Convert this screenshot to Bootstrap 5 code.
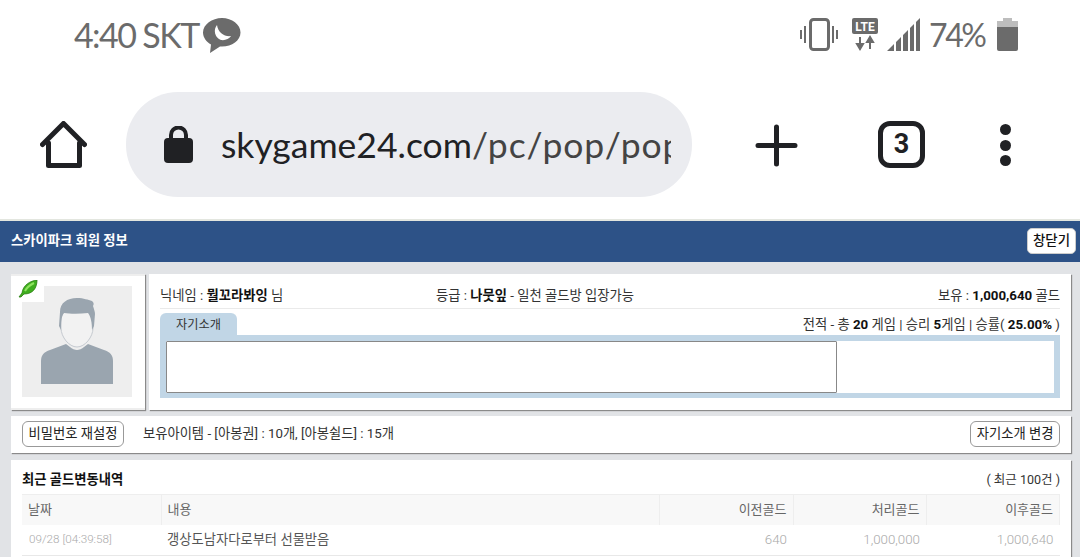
<!DOCTYPE html>
<html lang="ko">
<head>
<meta charset="UTF-8">
<meta name="viewport" content="width=device-width">
<title>스카이파크 회원 정보</title>
<link href="https://cdn.jsdelivr.net/npm/bootstrap@5.3.3/dist/css/bootstrap.min.css" rel="stylesheet">
<style>
  html, body { height: 557px; overflow: hidden; }
  body { background: #e1e3e6; font-family: Roboto, "Noto Sans CJK KR", sans-serif; font-size: 13.3px; color: #333; }
  b { color: #111; font-weight: 700; }
  .phone-top { background: #fff; height: 219px; }
  .status-row { height: 70px; padding: 18px 62px 0 74px; color: #666; }
  .status-text { font-family: Lato, sans-serif; font-size: 34px; line-height: 33px; letter-spacing: -1.6px; color: #6b6b6b; white-space: nowrap; }
  .pct-text { width: 56px; margin-left: 9px; font-size: 32px; letter-spacing: -2.4px; }
  .lte-icon { margin-left: 14px; }
  .signal-icon { margin-left: 9px; }
  .battery-icon { margin-left: 12px; }
  .tool-row { height: 149px; padding: 22px 55px 0 40px; align-items: flex-start; }
  .home-btn { margin-top: 29px; width: 47px; height: 47px; }
  .url-pill { width: 566px; height: 105px; margin-left: 39px; border-radius: 52px; background: #ebecf0; padding: 0 21px 0 38px; }
  .url-text { font-family: Lato, sans-serif; font-size: 35.5px; color: #202124; white-space: nowrap; overflow: hidden; margin-left: 28px; width: 450px; }
  .url-text span { color: #444; letter-spacing: .9px; }
  .plus-btn { margin: 32px 0 0 63px; width: 43px; height: 43px; }
  .tab-count { margin: 29px 0 0 80px; width: 47px; height: 47px; border: 5px solid #202124; border-radius: 12px; font-family: Roboto, sans-serif; font-weight: 700; font-size: 27px; color: #202124; }
  .dot-btn { margin: 32px 0 0 75px; width: 13px; }
  .dot-btn i { display: block; width: 11px; height: 11px; background: #202124; border-radius: 50%; margin-bottom: 4.5px; }
  .page-head { height: 43px; background: #2d5287; border-top: 2px solid #e3e6df; padding: 0 4px 2px 11px; }
  .page-title { color: #fff; font-weight: 700; font-size: 13.3px; }
  .close-btn { background: #fff; border: 1px solid #ccc; border-radius: 5px; font-size: 13.4px; font-weight: 500; color: #111; height: 26px; padding: 0 5px; line-height: 24px; }
  .page-wrap { padding: 12px 9px 0 11px; }
  .panel-box { background: #fff; box-shadow: 1px 1px 1px #8a8a8a; }
  .photo-box { width: 134px; height: 136px; padding: 10px 11px 12px; position: relative; border-bottom: 2px solid #eee; border-top: 2px solid #eee; }
  .photo-box svg.face { display: block; width: 110px; height: 111px; background: #eee; }
  .leaf-mark { position: absolute; left: 0; top: 0; width: 33px; height: 26px; background: #fff; padding: 3px 0 0 7px; }
  .info-box { margin-left: 4px; flex: 1; height: 136px; padding: 0 11px; }
  .info-top { height: 35px; border-bottom: 1px solid #eaeaea; padding-top: 12px; }
  .info-top > div { flex: 1; white-space: nowrap; }
  .info-top > div:first-child { flex: 0 0 276px; }
  .tab-line { height: 26px; }
  .intro-tab { width: 77px; height: 22px; margin-top: 4px; background: #c1d6e6; border-radius: 6px 6px 0 0; text-align: center; line-height: 24px; font-size: 12.2px; }
  .stat-line { margin-top: 5px; line-height: 22px; }
  .intro-frame { background: #fff; border: 6px solid #c1d6e6; border-bottom-width: 5px; height: 63px; }
  .intro-area { display: block; width: 671px; height: 52px; border: 1px solid #888; border-radius: 1px; background: #fff; padding: 0; margin: 0; resize: none; }
  .item-box { margin-top: 6px; height: 37px; padding: 0 11px 1px; }
  .line-btn { border: 1px solid #999; border-radius: 6px; background: #fff; height: 26px; padding: 0 5.5px; font-size: 13.3px; line-height: 24px; color: #222; }
  .item-text { margin-left: 19px; }
  .gold-box { margin-top: 7px; padding: 0 11px; height: 120px; }
  .gold-head { height: 34px; padding-top: 6px; }
  .gold-head strong { font-size: 13.3px; color: #111; font-weight: 700; }
  .gold-head span { font-size: 12.5px; }
  .gold-table { table-layout: fixed; width: 100%; border-collapse: collapse; }
  .gold-table th { background: #f8f8f8; font-weight: 400; color: #666; height: 30px; padding: 0 6px; border-right: 1px solid #eee; border-top: 1px solid #eee; font-size: 13px; }
  .gold-table td { height: 31px; padding: 0 6px; color: #aaa; border-bottom: 1px solid #e8e8e8; font-size: 13.3px; font-weight: 300; }
  .gold-table td.gold-date { font-size: 11.7px; padding-left: 7px; }
  .gold-table td.gold-memo { color: #555; font-weight: 400; }
</style>
</head>
<body>
<div class="phone-top">
  <div class="status-row d-flex justify-content-between">
    <div class="d-flex align-items-start">
      <span class="status-text">4:40 SKT</span>
      <svg class="ms-1" width="38" height="36" viewBox="0 0 38 36"><path d="M19 0C9 0 0 6.500 0 14.500c0 5 3.500 9.500 8 12L7 35l10-6.500h2c10 0 18.500-6 18.500-14S29 0 19 0z" fill="#6b6b6b"/><path d="M14 7a9.500 9.500 0 0 0 4 15c4 .7 8-1 10-4-6 1-13-3-14-11z" fill="#fff"/></svg>
    </div>
    <div class="d-flex align-items-start">
      <svg width="38" height="33" viewBox="0 0 38 33" fill="none" stroke="#6b6b6b"><rect x="10.500" y="1.500" width="18" height="30" rx="3" stroke-width="3"/><path d="M5 8v17M1 12v9M33 8v17M37 12v9" stroke-width="2"/></svg>
      <svg class="lte-icon" width="26" height="33" viewBox="0 0 26 33"><rect x="0" y="0" width="26" height="16" rx="2" fill="#6b6b6b"/><text x="13" y="13" text-anchor="middle" font-family="Roboto" font-weight="700" font-size="12" fill="#fff">LTE</text><path d="M8 19v8M5 26l3 5 3-5zM18 31v-8M15 24l3-5 3 5z" fill="#6b6b6b" stroke="#6b6b6b" stroke-width="2"/></svg>
      <svg class="signal-icon" width="33" height="33" viewBox="0 0 33 33" fill="#6b6b6b"><path d="M0 33l7-7v7zM9 33V24l5-5v14zM16 33V17l5-5v21zM23 33V10l4-4v27zM29 33V4l4-4v33z"/></svg>
      <span class="status-text pct-text">74%</span>
      <svg class="battery-icon" width="21" height="33" viewBox="0 0 21 33"><path d="M6 0h9v3h6v6H0V3h6z" fill="#bdbdbd"/><path d="M0 9h21v22a2 2 0 0 1-2 2H2a2 2 0 0 1-2-2z" fill="#6b6b6b"/></svg>
    </div>
  </div>
  <div class="tool-row d-flex">
    <svg class="home-btn" viewBox="0 0 47 47" fill="none" stroke="#202124" stroke-width="5" stroke-linejoin="round" stroke-linecap="round"><path d="M2.500 23.500L23.500 2.500 44.500 23.500M8.500 22v22.500h31V22"/></svg>
    <div class="url-pill d-flex align-items-center">
      <svg width="29" height="37" viewBox="0 0 29 37"><path d="M7 15V9a7.500 7.500 0 0 1 15 0v6" fill="none" stroke="#202124" stroke-width="4"/><rect x="0" y="12" width="29" height="25" rx="4" fill="#202124"/></svg>
      <div class="url-text">skygame24.com<span>/pc/pop/pop</span></div>
    </div>
    <svg class="plus-btn" viewBox="0 0 43 43" stroke="#202124" stroke-width="5" stroke-linecap="round"><path d="M21.500 3v37M3 21.500h37"/></svg>
    <div class="tab-count d-flex align-items-center justify-content-center">3</div>
    <div class="dot-btn"><i></i><i></i><i></i></div>
  </div>
</div>
<div class="page-head d-flex align-items-center justify-content-between">
  <div class="page-title">스카이파크 회원 정보</div>
  <button class="close-btn">창닫기</button>
</div>
<div class="page-wrap">
  <div class="d-flex">
    <div class="panel-box photo-box">
      <svg class="face" viewBox="0 0 110 111">
        <path d="M19 98V75c0-6 3-9 9-11l16-6 4 3c2 2 5 3 7 3s5-1 7-3l4-3 16 6c6 2 9 5 9 11v23z" fill="#9aa5af"/>
        <path d="M39 35c0-9 5-13 16-13s16 4 16 13v7c0 9-8 19-16 19s-16-10-16-19z" fill="#f2f2f2" stroke="#c5cad0"/>
        <path d="M39 44l-2-4 1-14c0-9 7-14 17-14 7 0 11 2 15 3 2 2 2 3 1 5 1 3 2 6 2 8l-1 12-2 4c0-7-1-13-4-17-8 1-18 1-24 0-3 4-3 10-3 17z" fill="#9aa5af"/>
      </svg>
      <div class="leaf-mark"><svg width="20" height="18" viewBox="0 0 20 18"><path d="M1 17l3-4C5 5 12 1 19 0c0 8-4 14-13 14l-3 3z" fill="#3fae1e" stroke="#2a7d12" stroke-width=".8"/><path d="M7 11c2-4 5-6 9-8" stroke="#8ee35f" stroke-width="2" fill="none"/></svg></div>
    </div>
    <div class="panel-box info-box">
      <div class="info-top d-flex">
        <div>닉네임 : <b>뭘꼬라봐잉</b> 님</div>
        <div>등급 : <b>나뭇잎</b> - 일천 골드방 입장가능</div>
        <div class="text-end">보유 : <b>1,000,640</b> 골드</div>
      </div>
      <div class="tab-line d-flex justify-content-between align-items-start">
        <div class="intro-tab">자기소개</div>
        <div class="stat-line">전적 - 총 <b>20</b> 게임 | 승리 <b>5</b>게임 | 승률( <b>25.00%</b> )</div>
      </div>
      <div class="intro-frame"><textarea class="intro-area"></textarea></div>
    </div>
  </div>
  <div class="panel-box item-box d-flex align-items-center">
    <button class="line-btn">비밀번호 재설정</button>
    <div class="item-text flex-grow-1">보유아이템 - [아봉권] : 10개, [아봉쉴드] : 15개</div>
    <button class="line-btn">자기소개 변경</button>
  </div>
  <div class="panel-box gold-box">
    <div class="gold-head d-flex justify-content-between align-items-center">
      <strong>최근 골드변동내역</strong>
      <span>( 최근 100건 )</span>
    </div>
    <table class="gold-table">
      <colgroup><col style="width:139px"><col style="width:498px"><col style="width:134px"><col style="width:133px"><col></colgroup>
      <tr><th>날짜</th><th>내용</th><th class="text-end">이전골드</th><th class="text-end">처리골드</th><th class="text-end">이후골드</th></tr>
      <tr><td class="gold-date">09/28 [04:39:58]</td><td class="gold-memo">갱상도남자다로부터 선물받음</td><td class="text-end">640</td><td class="text-end">1,000,000</td><td class="text-end">1,000,640</td></tr>
    </table>
  </div>
</div>
<script src="https://cdn.jsdelivr.net/npm/bootstrap@5.3.3/dist/js/bootstrap.bundle.min.js"></script>
</body>
</html>
